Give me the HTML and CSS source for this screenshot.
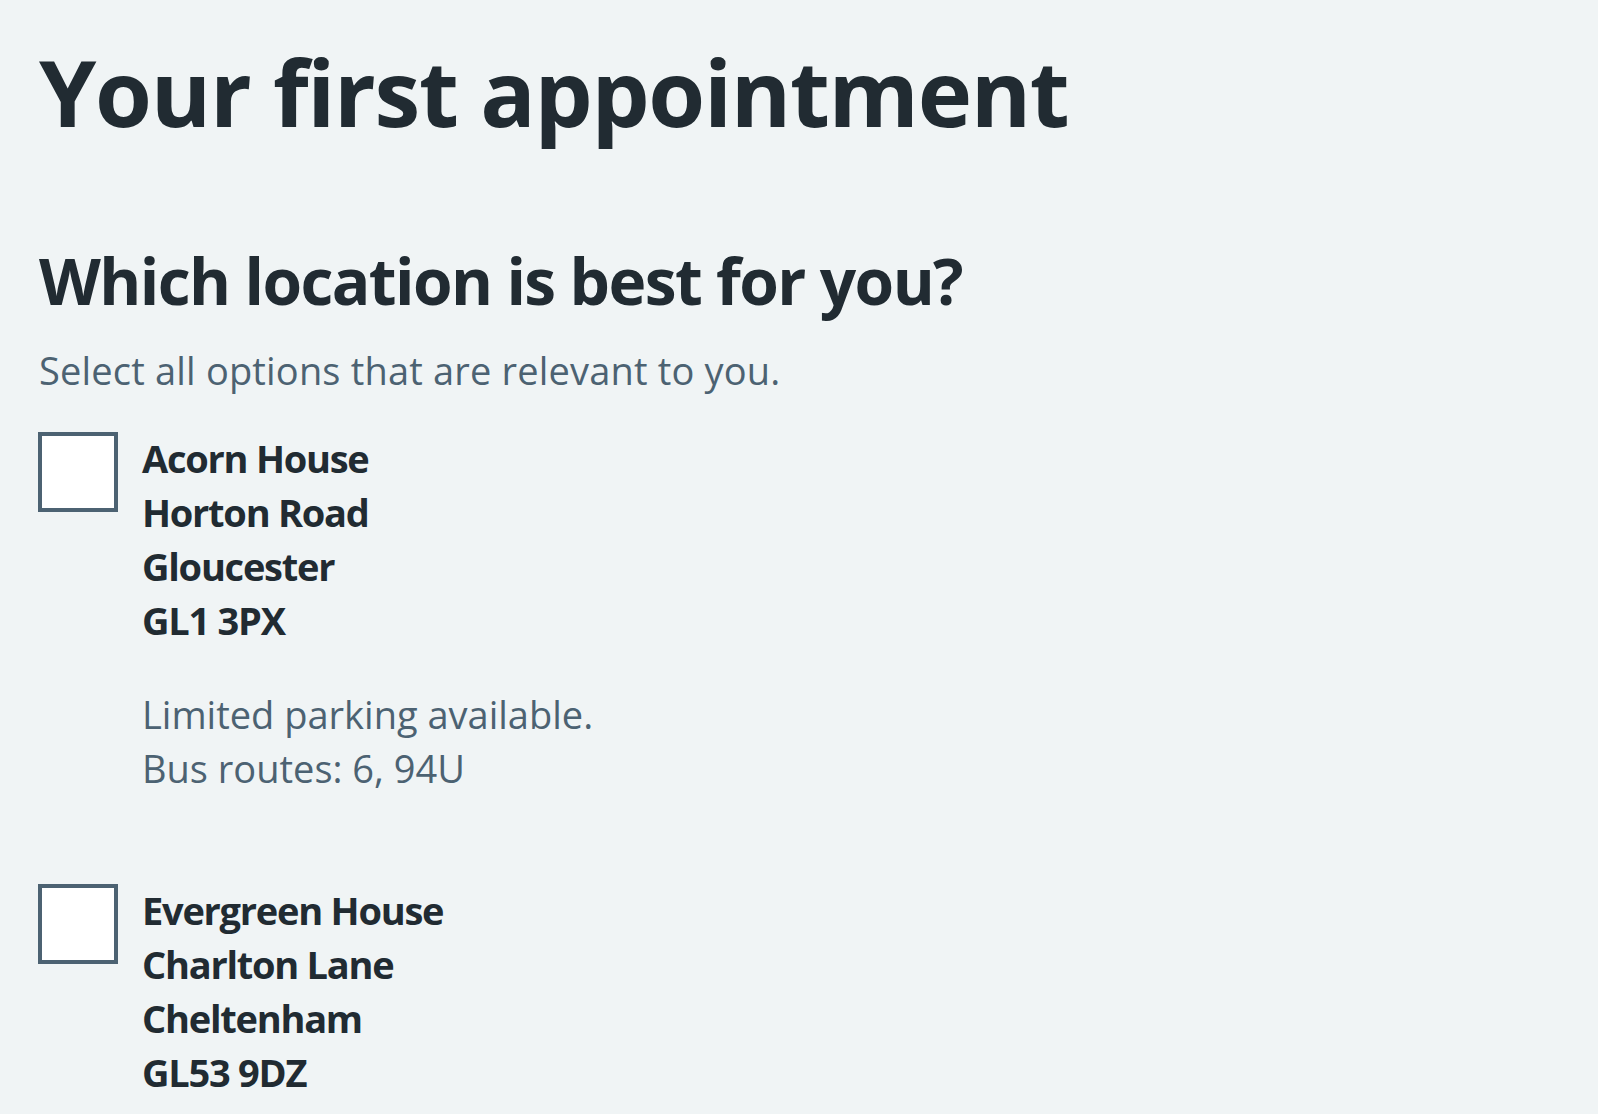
FILE: index.html
```html
<!DOCTYPE html>
<html lang="en">
<head>
<meta charset="utf-8">
<title>Your first appointment</title>
<link rel="stylesheet" href="styles.css">
</head>
<body>
<main class="page">
  <h1 class="title">Your first appointment</h1>
  <fieldset class="fieldset">
    <div class="legend">Which location is best for you?</div>
    <div class="hint">Select all options that are relevant to you.</div>
    <div class="options">
      <div class="option">
        <input class="box" type="checkbox" id="loc1">
        <label class="label" for="loc1">
          <span class="address">Acorn House<br>Horton Road<br>Gloucester<br>GL1 3PX</span>
          <span class="note">Limited parking available.<br>Bus routes: 6, 94U</span>
        </label>
      </div>
      <div class="option">
        <input class="box" type="checkbox" id="loc2">
        <label class="label" for="loc2">
          <span class="address">Evergreen House<br>Charlton Lane<br>Cheltenham<br>GL53 9DZ</span>
        </label>
      </div>
    </div>
  </fieldset>
</main>
</body>
</html>
```
FILE: styles.css
```css
html, body {
  margin: 0;
  padding: 0;
  background: #f0f4f5;
  color: #212b32;
  font-family: "Open Sans", "Noto Sans", "Liberation Sans", sans-serif;
}

.page {
  padding: 36px 38px 0;
}

.title {
  margin: 0 0 0 1px;
  font-size: 92px;
  line-height: 112px;
  font-weight: 700;
  letter-spacing: -1.3px;
}

.fieldset {
  margin: 93px 0 0;
  padding: 0;
  border: 0;
  min-width: 0;
}

.legend {
  margin-left: 1px;
  font-size: 64px;
  line-height: 80px;
  font-weight: 700;
  letter-spacing: -1.6px;
}

.hint {
  margin-top: 21px;
  margin-left: 1px;
  font-size: 38px;
  line-height: 56px;
  color: #4c6272;
  letter-spacing: 0.18px;
}

.options {
  margin-top: 33px;
  display: flex;
  flex-direction: column;
  gap: 88px;
}

.option {
  display: flex;
  align-items: flex-start;
  gap: 24px;
}

.box {
  appearance: none;
  -webkit-appearance: none;
  flex: none;
  width: 80px;
  height: 80px;
  margin: 1px 0 0;
  box-sizing: border-box;
  border: 4px solid #4c6272;
  background: #ffffff;
  border-radius: 0;
}

.label {
  display: flex;
  flex-direction: column;
  gap: 40px;
  font-size: 38px;
  line-height: 54px;
}

.address {
  font-weight: 700;
  letter-spacing: -1.25px;
}

.note {
  color: #4c6272;
}
```
